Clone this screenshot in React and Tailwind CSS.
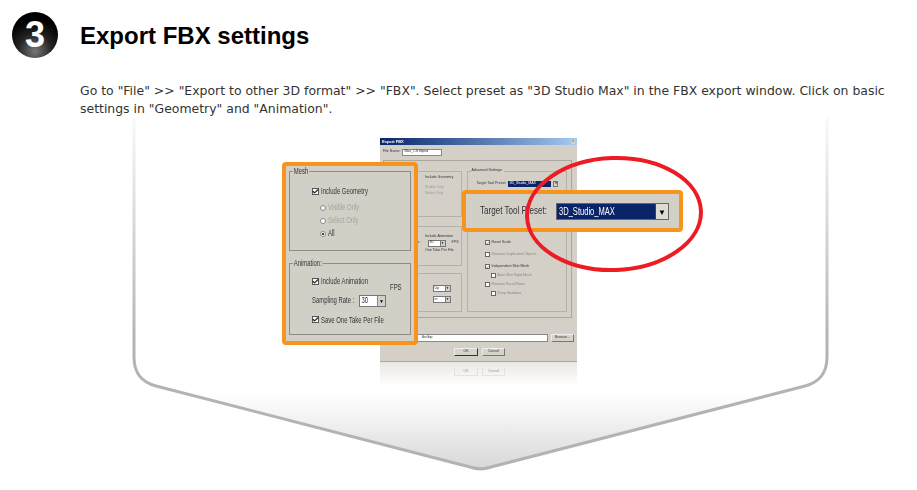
import { Check } from "lucide-react";

const tiny = "font-['Liberation_Sans',sans-serif] text-[3.6px] leading-none text-[#333] whitespace-nowrap";
const narrow = "font-['Liberation_Sans',sans-serif] text-[8.5px] leading-none whitespace-nowrap inline-block origin-left scale-x-[0.7]";

function MiniCheck({ label, muted, className = "" }) {
  return (
    <div className={`flex items-center gap-[2px] ${className}`}>
      <span className="w-[5px] h-[5px] bg-white border-[0.5px] border-[#666] flex items-center justify-center">
        {!muted && <Check size={4} strokeWidth={4} className="text-[#333]" />}
      </span>
      <span className={`${tiny} ${muted ? "!text-[#888]" : ""}`}>{label}</span>
    </div>
  );
}

function MiniCombo({ value, className = "" }) {
  return (
    <div className={`h-[7px] w-[18px] bg-white border-[0.5px] border-[#777] flex items-center justify-between ${className}`}>
      <span className={`${tiny} pl-[1px]`}>{value}</span>
      <span className="w-[5px] h-full bg-[#d4d0c8] border-l-[0.5px] border-[#777] flex items-center justify-center text-[3px] leading-none text-black">▼</span>
    </div>
  );
}

function MiniButton({ label, strong }) {
  return (
    <div className={`h-[8px] flex items-center justify-center bg-[#d6d3cb] border-[0.5px] border-t-[#eee] border-l-[#eee] ${strong ? "w-[24px] border-r-[#333] border-b-[#333]" : "w-[23px] border-r-[#777] border-b-[#777]"}`}>
      <span className={tiny}>{label}</span>
    </div>
  );
}

function Dialog() {
  return (
    <div className="w-[197px] h-[224px] bg-[#d4d0c8] border-b border-[#aaa79f] flex flex-col blur-[0.25px]">
      <div className="h-[7px] bg-gradient-to-r from-[#0a246a] to-[#a6caf0] flex items-center justify-between px-[2px]">
        <span className="font-['Liberation_Sans',sans-serif] text-[4px] leading-none font-bold text-white">Export FBX</span>
        <span className="w-[4px] h-[4px] bg-[#d4d0c8] text-[3px] leading-none text-black text-center">×</span>
      </div>
      <div className="flex items-center gap-[2px] pl-[3px] mt-[4px] h-[6px]">
        <span className={tiny}>File Name:</span>
        <span className="w-[40px] h-[7px] bg-white border-[0.5px] border-[#888] pl-[1px] flex items-center">
          <span className={tiny}>Max_CS Biped</span>
        </span>
      </div>
      <div className="ml-[3px] mr-[5px] mt-[5px] h-[158px] border-[0.5px] border-[#aaa79f] pt-[10px] pl-[2px] pr-[4px] flex gap-[5px]">
        <div className="w-[76px] flex flex-col">
          <div className="h-[46px] border-[0.5px] border-[#b4b1a9]">
            <p className={`${tiny} mt-[4px] ml-[38px]`}>Include Geometry</p>
            <p className={`${tiny} mt-[6px] ml-[38px] !text-[#999]`}>Visible Only</p>
            <p className={`${tiny} mt-[3px] ml-[38px] !text-[#999]`}>Select Only</p>
          </div>
          <div className="h-[40px] mt-[9px] border-[0.5px] border-[#b4b1a9]">
            <p className={`${tiny} mt-[8px] ml-[38px]`}>Include Animation</p>
            <div className="flex items-center justify-end gap-[6px] pr-[2px] mt-[1px]">
              <span className={tiny}>Rate :</span>
              <MiniCombo value="30" />
              <span className={tiny}>FPS</span>
            </div>
            <p className={`${tiny} mt-[2px] ml-[38px]`}>One Take Per File</p>
          </div>
          <div className="h-[39px] mt-[7px] border-[0.5px] border-[#b4b1a9] flex flex-col items-end pr-[10px] pt-[11px] gap-[4px]">
            <MiniCombo value="Up" />
            <MiniCombo value="m" />
          </div>
        </div>
        <div className="w-[101px] h-[141px] border-[0.5px] border-[#b4b1a9] relative pl-[9px]">
          <span className={`${tiny} absolute -top-[3px] left-[3px] bg-[#d4d0c8] px-[1px]`}>Advanced Settings:</span>
          <div className="flex items-center gap-[2px] mt-[9px]">
            <span className={tiny}>Target Tool Preset:</span>
            <span className="w-[43px] h-[6px] bg-[#0a246a] pl-[1px] flex items-center font-['Liberation_Sans',sans-serif] text-[3.6px] text-white">3D_Studio_MAX</span>
            <span className="w-[5px] h-[6px] bg-[#d4d0c8] border-[0.5px] border-[#777] text-[3px] leading-none text-center text-black">▼</span>
          </div>
          <MiniCheck label="Reset Scale" className="ml-[8px] mt-[53px]" />
          <MiniCheck label="Rename Duplicated Objects" className="ml-[8px] mt-[7px]" muted />
          <MiniCheck label="Independent Skin Mesh" className="ml-[8px] mt-[7px]" />
          <MiniCheck label="Auto Skin Rigid Mesh" className="ml-[14px] mt-[4px]" muted />
          <MiniCheck label="Remove Facial Bone" className="ml-[8px] mt-[4px]" muted />
          <MiniCheck label="Keep Seedone" className="ml-[14px] mt-[4px]" muted />
        </div>
      </div>
      <div className="flex items-center gap-[3px] mt-[16px] pl-[3px]">
        <span className="w-[165px] h-[8px] bg-white border-[0.5px] border-[#888] flex items-center pl-[37px]">
          <span className={tiny}>.fbx/bip</span>
        </span>
        <MiniButton label="Browse..." />
      </div>
      <div className="flex justify-center gap-[4px] mt-[6px] pl-[2px]">
        <MiniButton label="OK" strong />
        <MiniButton label="Cancel" />
      </div>
    </div>
  );
}

function Box({ children, title, className = "" }) {
  return (
    <div className={`relative border border-[#8f8d86] mx-[3px] ${className}`}>
      <span className={`${narrow} absolute -top-[5px] left-[3px] px-[1px] bg-[#d2cfc7] text-[#333]`}>{title}</span>
      {children}
    </div>
  );
}

function BigCheck({ label, className = "" }) {
  return (
    <div className={`flex items-center gap-[2px] ${className}`}>
      <span className="shrink-0 w-[7px] h-[7px] bg-white border border-[#555] flex items-center justify-center overflow-visible">
        <Check size={7} strokeWidth={4} className="shrink-0 text-[#222]" />
      </span>
      <span className={`${narrow} text-[#333]`}>{label}</span>
    </div>
  );
}

function Radio({ label, on }) {
  return (
    <div className="flex items-center gap-[2px] h-[8px]">
      <span className="shrink-0 w-[6px] h-[6px] rounded-full border border-[#888] bg-white flex items-center justify-center">
        {on && <span className="w-[2px] h-[2px] rounded-full bg-black" />}
      </span>
      <span className={`${narrow} ${on ? "text-[#333]" : "text-[#a5a39c]"}`}>{label}</span>
    </div>
  );
}

function MeshCallout() {
  return (
    <div className="absolute left-[-98px] top-[24px] w-[136px] h-[183px] box-border border-4 border-[#f7941d] rounded-[4px] bg-[#d2cfc7] pt-[5px] flex flex-col blur-[0.25px]">
      <Box title="Mesh" className="h-[80px]">
        <BigCheck label="Include Geometry" className="ml-[22px] mt-[15px]" />
        <div className="ml-[30px] mt-[8px] flex flex-col gap-[5px]">
          <Radio label="Visible Only" />
          <Radio label="Select Only" />
          <Radio label="All" on />
        </div>
      </Box>
      <Box title="Animation:" className="h-[72px] mt-[12px]">
        <div className="relative pt-[13px]">
          <BigCheck label="Include Animation" className="ml-[22px]" />
          <span className={`${narrow} absolute left-[100px] top-[19px] text-[#333]`}>FPS</span>
        </div>
        <div className="flex items-center ml-[22px] mt-[9px]">
          <span className={`${narrow} w-[47px] text-[#333]`}>Sampling Rate :</span>
          <span className="w-[27px] h-[12px] bg-white border border-[#777] flex items-center justify-between">
            <span className={`${narrow} text-[#333] pl-[2px]`}>30</span>
            <span className="w-[8px] h-full bg-[#d4d0c8] border-l border-[#888] text-[5px] leading-[10px] text-center text-black">▼</span>
          </span>
        </div>
        <BigCheck label="Save One Take Per File" className="ml-[22px] mt-[9px]" />
      </Box>
    </div>
  );
}

function PresetCallout() {
  return (
    <div className="absolute left-[82px] top-[52px] w-[221px] h-[42px] box-border border-4 border-[#f7941d] rounded-[4px] bg-[#d2cfc7] flex items-center pl-[14px] blur-[0.25px]">
      <span className="w-[76px] shrink-0 font-['Liberation_Sans',sans-serif] text-[11.5px] leading-none text-[#333] whitespace-nowrap origin-left scale-x-[0.7]">Target Tool Preset:</span>
      <div className="w-[113px] h-[17px] bg-[#d4d0c8] border border-[#666] flex items-center">
        <span className="flex-1 h-full bg-[#0a246a] pl-[2px] font-['Liberation_Sans',sans-serif] text-[10.5px] leading-[15px] text-white">
          <span className="inline-block origin-left scale-x-[0.72] whitespace-nowrap">3D_Studio_MAX</span>
        </span>
        <span className="w-[13px] h-full border-l border-[#444] bg-[#dedbd3] text-[8px] leading-[15px] text-center text-black">▼</span>
      </div>
    </div>
  );
}

export default function App() {
  return (
    <div className="w-[917px] h-[490px] overflow-hidden bg-white flex flex-col">
      <header className="flex items-center gap-[22px] pl-[12px] pt-[12px]">
        <div className="w-[46px] h-[46px] rounded-full bg-[radial-gradient(circle_at_50%_85%,#777_0%,#222_38%,#000_70%)] flex items-center justify-center">
          <span className="font-['Liberation_Sans',sans-serif] font-bold text-[36px] leading-none text-white">3</span>
        </div>
        <h1 className="font-['Liberation_Sans',sans-serif] font-bold text-[24px] leading-none text-black mt-[2px]">Export FBX settings</h1>
      </header>

      <p className="ml-[80px] mt-[24px] font-['DejaVu_Sans',sans-serif] text-[12.45px] leading-[18px] text-[#333] whitespace-nowrap">
        Go to "File" &gt;&gt; "Export to other 3D format" &gt;&gt; "FBX". Select preset as "3D Studio Max" in the FBX export window. Click on basic
        <br />
        settings in "Geometry" and "Animation".
      </p>

      <section className="relative flex-1 pt-[20px] pl-[380px]">
        <svg className="absolute inset-0 w-[917px] h-[371px]" viewBox="0 119 917 371" fill="none">
          <defs>
            <linearGradient id="edge" x1="0" y1="100" x2="0" y2="340" gradientUnits="userSpaceOnUse">
              <stop offset="0" stopColor="#b3b3b3" stopOpacity="0" />
              <stop offset="1" stopColor="#b3b3b3" />
            </linearGradient>
            <linearGradient id="fill" x1="0" y1="395" x2="0" y2="470" gradientUnits="userSpaceOnUse">
              <stop offset="0" stopColor="#ffffff" />
              <stop offset="1" stopColor="#d8d8d8" />
            </linearGradient>
          </defs>
          <path
            d="M134 100V358C134 374 141 383 156 387L470 468C477 470.500 484 470.500 491 468L805 387C820 383 827 374 827 358V100"
            fill="url(#fill)"
            stroke="url(#edge)"
            strokeWidth="3"
          />
        </svg>

        <div className="relative w-[197px]">
          <Dialog />
          <div className="relative h-[24px] bg-gradient-to-b from-[#d4d0c8]/50 to-transparent flex justify-center gap-[4px] pt-[6px] pl-[2px] blur-[0.4px]">
            <div className="w-[24px] h-[8px] border-x border-b border-[#bbb]/60 flex items-center justify-center opacity-50">
              <span className={tiny}>OK</span>
            </div>
            <div className="w-[23px] h-[8px] border-x border-b border-[#bbb]/60 flex items-center justify-center opacity-50">
              <span className={tiny}>Cancel</span>
            </div>
          </div>
          <MeshCallout />
          <PresetCallout />
          <svg className="absolute left-[140px] top-[14px] w-[190px] h-[125px]" viewBox="0 0 190 125" fill="none">
            <ellipse cx="94" cy="62" rx="87" ry="56" stroke="#ed1c24" strokeWidth="4" transform="rotate(-2 94 62)" />
          </svg>
        </div>
      </section>
    </div>
  );
}
